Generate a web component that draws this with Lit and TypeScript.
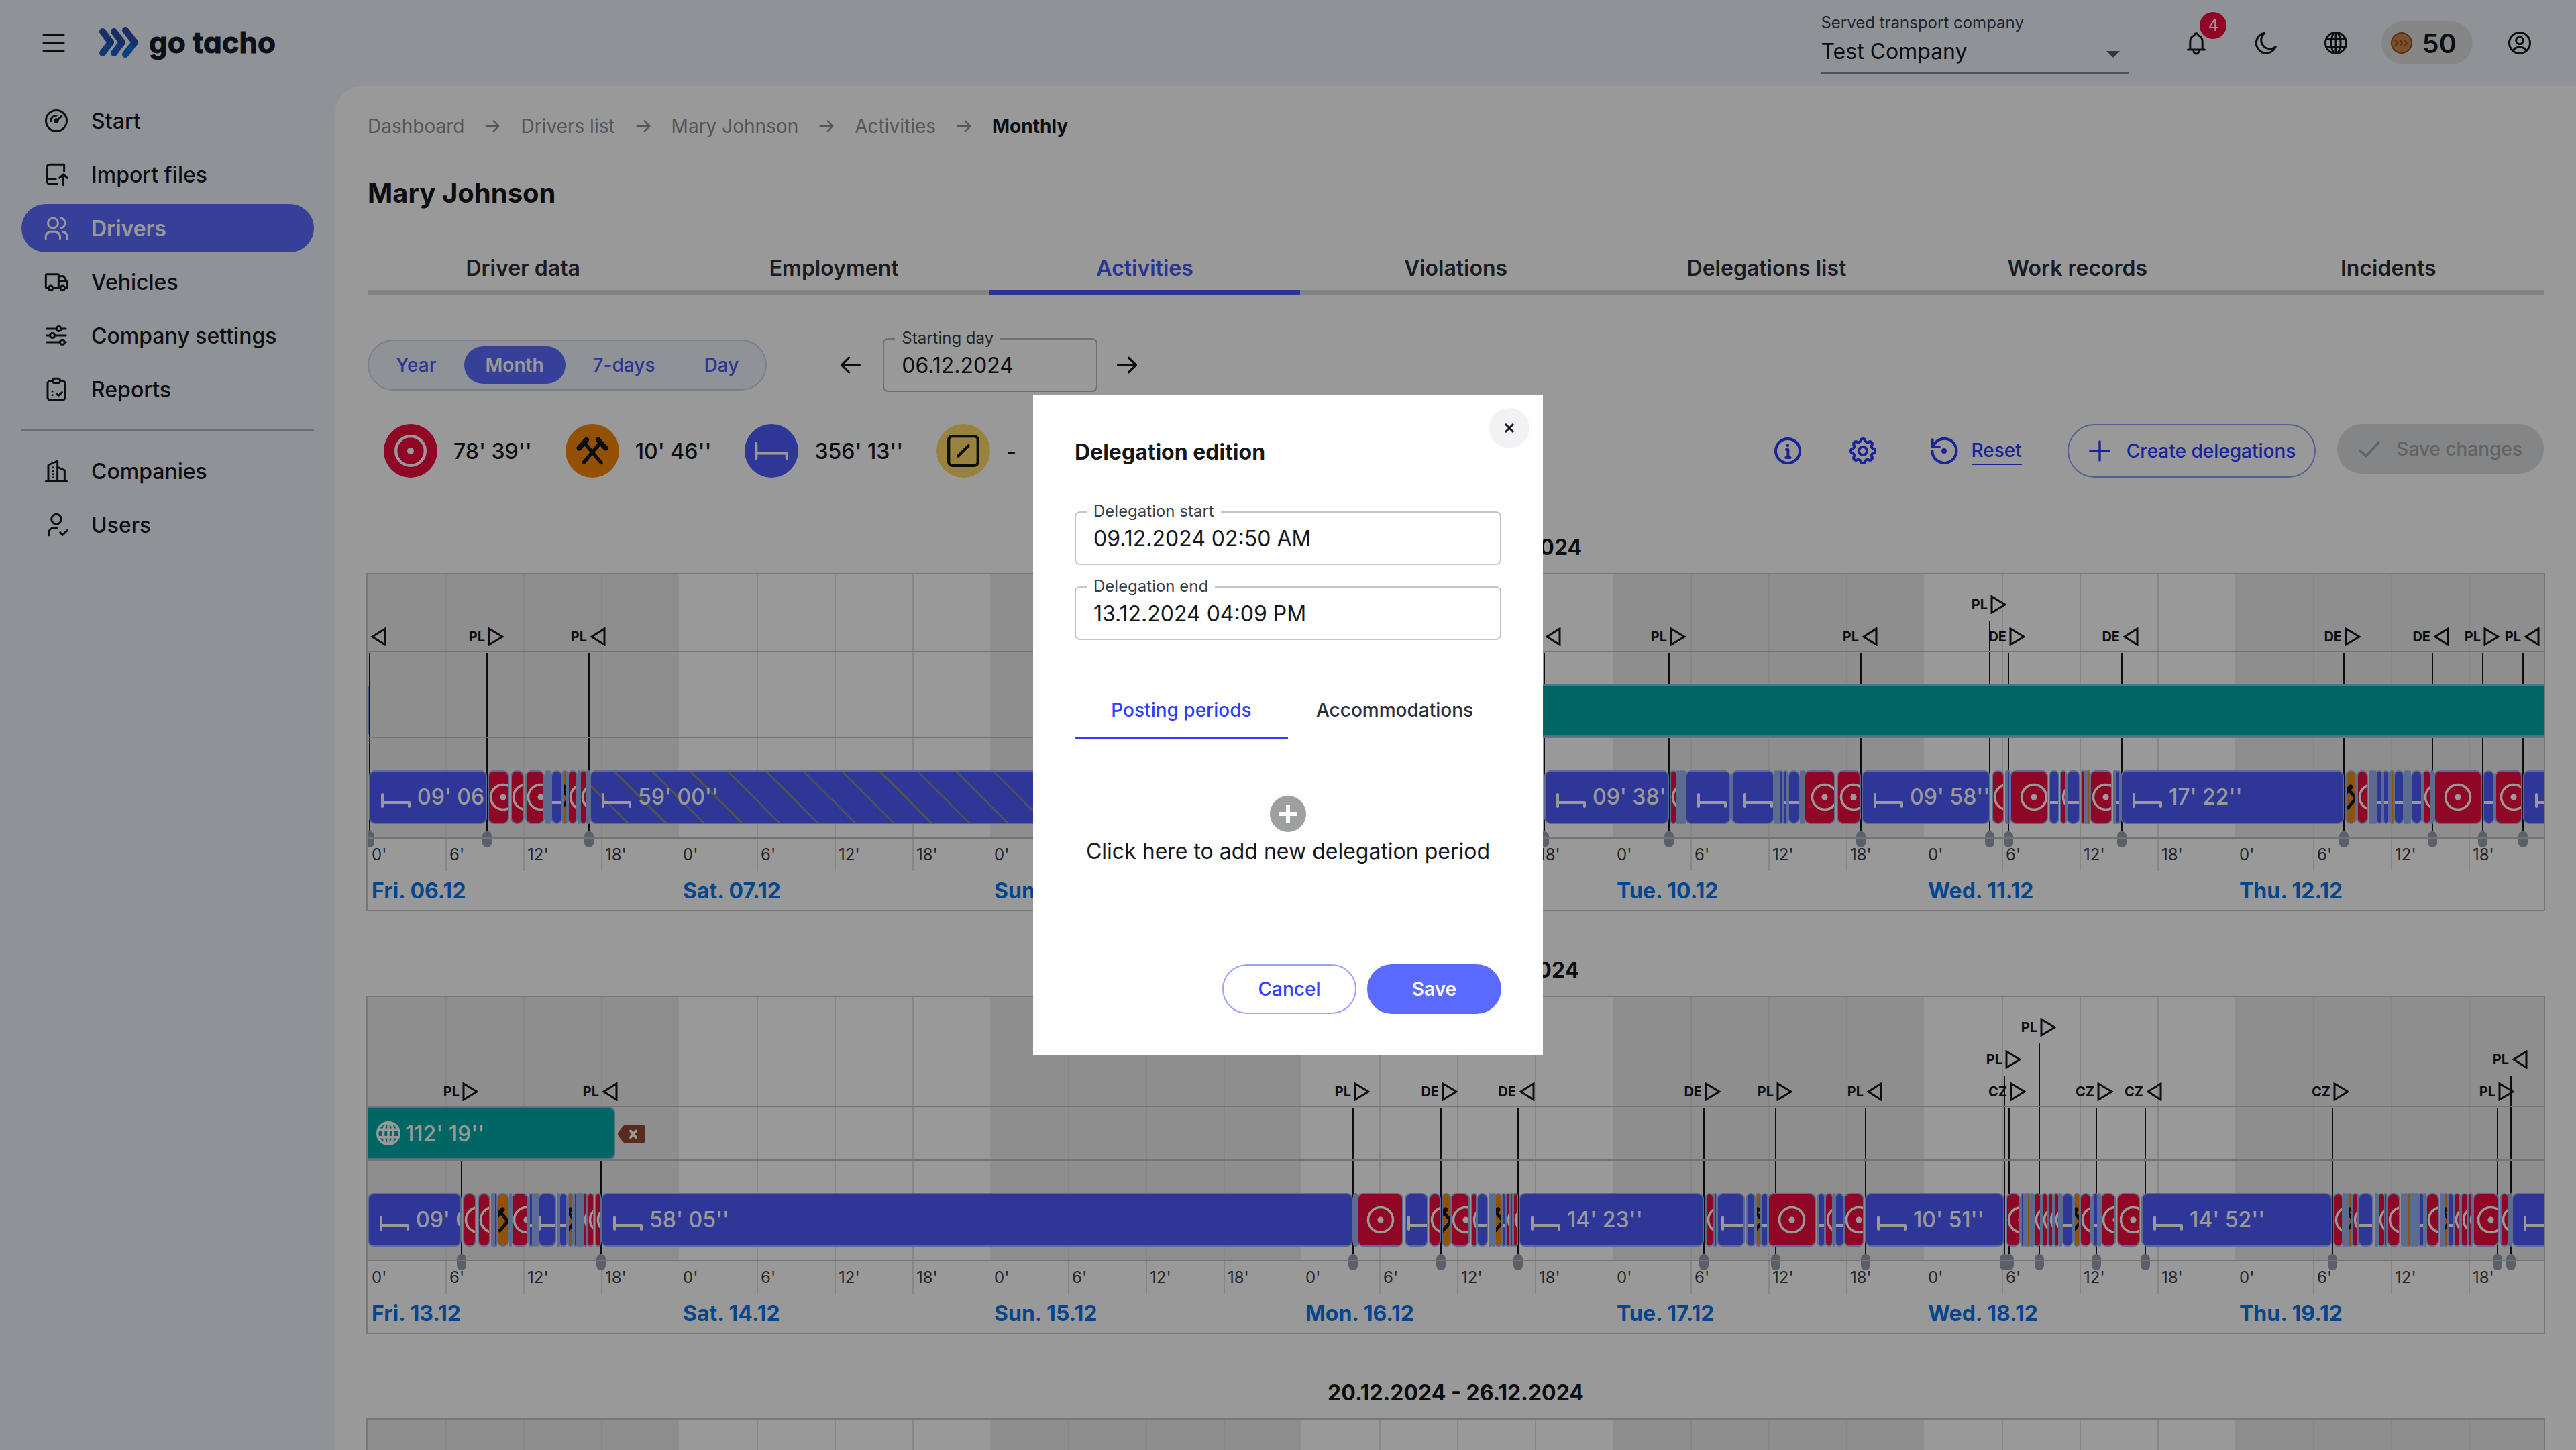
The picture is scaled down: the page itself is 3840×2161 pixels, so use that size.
import { LitElement, html, svg, css, nothing, TemplateResult } from "lit";
import { customElement, property } from "lit/decorators.js";
import { classMap } from "lit/directives/class-map.js";
import { styleMap } from "lit/directives/style-map.js";

/* ---------- icons (24 x 24 grid, stroked) ---------- */

const ICONS: Record<string, TemplateResult> = {
  menu: svg`<path d="M3 5h18M3 12h18M3 19h18"/>`,
  gauge: svg`<circle cx="12" cy="12" r="9.3"/><path d="M7 12.5a5 5 0 0 1 5-5.2M13 11.4l3.8-3.6"/><circle cx="12" cy="12" r="1.3"/>`,
  import: svg`<path d="M12.5 20.5H6a2.5 2.5 0 0 1-2.500-2.500V5.500a2.300 2.300 0 0 1 2.300-2.300h13.200v6M3.800 16.400h7.700M18.300 21.500v-9M14.800 15.200l3.500-3.300 3.500 3.300"/>`,
  users: svg`<circle cx="9" cy="7.5" r="4.5"/><path d="M2.5 21.5v-1.800a4.600 4.600 0 0 1 4.600-4.600h3.600a4.600 4.600 0 0 1 4.600 4.600v1.800M16.400 3.200a4.400 4.400 0 0 1 0 8.600M21.600 21.500v-1.800a4.600 4.600 0 0 0-3.400-4.400"/>`,
  truck: svg`<path d="M5 17.5H3.6a1 1 0 0 1-1-1V6.2a1 1 0 0 1 1-1H14V17.5M9 17.5h6.5M14 7h4.4l3 4.6v5.9H20M14 11.6h7.4"/><circle cx="7" cy="17.6" r="2"/><circle cx="17.6" cy="17.6" r="2"/>`,
  sliders: svg`<path d="M3.5 6h8.6M16.4 6h4.1M3.5 12h2.8M10.6 12h9.9M3.5 18h11.8M19.4 18h1.1"/><circle cx="14.2" cy="6" r="2.1"/><circle cx="8.4" cy="12" r="2.1"/><circle cx="17.3" cy="18" r="2.1"/>`,
  clipboard: svg`<rect x="4.2" y="4.8" width="15.6" height="16.7" rx="2"/><rect x="8.7" y="2.6" width="6.6" height="3.8" rx="1.6" class="hole"/><path d="M8.4 13.8h.1M8.4 17.2h.1M12.3 16.2l1.6 1.5 3.2-3"/>`,
  companies: svg`<path d="M2.6 21.3h18.8M4.8 21.3V6.6L13 3v18.3M13 8.4l6.4 2.9v10M9 8.8v.1M9 11.8v.1M9 14.8v.1M9 17.8v.1"/>`,
  usercheck: svg`<circle cx="12" cy="7" r="4.4"/><path d="M5.2 21.5v-2.2a4.4 4.4 0 0 1 4.4-4.4h3.2M15.4 19l2.1 2.2 4.3-4"/>`,
  bell: svg`<path d="M4.5 18h15M6.5 18v-7.5a5.5 5.5 0 0 1 3.7-5.2a1.8 1.8 0 0 1 3.6 0a5.5 5.5 0 0 1 3.7 5.2V18M9.6 18.4v.8a2.4 2.4 0 0 0 4.8 0v-.8"/>`,
  moon: svg`<path d="M10.6 3.2a9 9 0 1 0 9.9 12.4a6.6 6.6 0 0 1-9.9-12.4z"/>`,
  globe: svg`<circle cx="12" cy="12" r="9.3"/><ellipse cx="12" cy="12" rx="4.3" ry="9.3"/><path d="M3.3 8.7h17.4M3.3 15.3h17.4M12 2.7v18.6"/>`,
  account: svg`<circle cx="12" cy="12" r="9.3"/><circle cx="12" cy="9.8" r="3.2"/><path d="M6.2 19.2c.8-2.7 3-3.4 5.8-3.4s5 .7 5.8 3.4"/>`,
  right: svg`<path d="M4 12h16M13.5 5.5L20 12l-6.500 6.500"/>`,
  left: svg`<path d="M20 12H4M10.5 5.5L4 12l6.500 6.500"/>`,
  info: svg`<circle cx="12" cy="12" r="9"/><path d="M11 11h1.2v6M10.6 17h3.2M12 7.8v.3"/>`,
  gear: svg`<path d="M10.3 4.3c.4-1.8 3-1.8 3.4 0a1.7 1.7 0 0 0 2.6 1.1c1.5-1 3.3.8 2.4 2.3a1.7 1.7 0 0 0 1 2.6c1.8.4 1.8 3 0 3.4a1.7 1.7 0 0 0-1 2.6c.9 1.5-.9 3.3-2.4 2.4a1.7 1.7 0 0 0-2.6 1c-.4 1.8-3 1.8-3.4 0a1.7 1.7 0 0 0-2.6-1c-1.5.9-3.3-.9-2.4-2.4a1.7 1.7 0 0 0-1-2.6c-1.8-.4-1.8-3 0-3.4a1.7 1.7 0 0 0 1-2.6c-.9-1.5.9-3.3 2.4-2.3a1.7 1.7 0 0 0 2.6-1.1z"/><circle cx="12" cy="12" r="3"/>`,
  reset: svg`<path d="M3.2 12a9 9 0 1 0 1.9-5.6L3.5 9M3.3 3.6V9H8.4"/><circle cx="12" cy="12" r="1"/>`,
  plus: svg`<path d="M12 3.500v17M3.500 12h17"/>`,
  check: svg`<path d="M3.5 13.5l5.5 5L20.5 6"/>`,
};

const icon = (name: string, cls = "") =>
  html`<svg class="icon ${cls}" viewBox="0 0 24 24" aria-hidden="true">${ICONS[name]}</svg>`;

/* tachograph mode pictograms, 44 x 44 grid */
const driveGlyph = svg`<circle cx="22" cy="22" r="18.5" fill="none" stroke="#fff" stroke-width="3.5"/><circle cx="22" cy="22" r="4.6" fill="#fff"/>`;
const driveDisc = svg`<circle cx="22" cy="22" r="20" fill="none" stroke="#fff" stroke-width="4"/><circle cx="22" cy="22" r="4.6" fill="#fff"/>`;
const restGlyph = svg`<path d="M2 18v18M2 30h40M42 30v6" fill="none" stroke="#fff" stroke-width="4" stroke-linecap="round"/>`;
const restDisc = svg`<path d="M1 12v20M1 25h42M43 25v7" fill="none" stroke="#fff" stroke-width="4" stroke-linecap="round"/>`;
const workGlyph = svg`<g fill="none" stroke="#15171c" stroke-linecap="round"><path d="M12 12l22 26M32 12L10 38" stroke-width="5"/><path d="M4 18l10-11M40 18L30 7" stroke-width="7"/></g>`;
const availGlyph = svg`<g fill="none" stroke="#15171c" stroke-linecap="round"><rect x="2" y="2" width="40" height="40" rx="5" stroke-width="4"/><path d="M15 29l14-14" stroke-width="4"/></g>`;

const DISC_GLYPHS: Record<string, TemplateResult> = { drive: driveDisc, work: workGlyph, rest: restDisc, avail: availGlyph };

/* ---------- data ---------- */

/* A week is 3248 units wide: 464 for each day. */
const WEEK = 3248;
const pct = (v: number) => `${(v / WEEK) * 100}%`;

type Seg = [from: number, to: number, mode: "R" | "B" | "O" | "H" | "p", label?: string];
type Mark = [at: number, dir: ">" | "<", country: string, level?: number];

interface Week {
  title: string;
  tall?: boolean;
  days: string[];
  marks: Mark[];
  segs: Seg[];
  delegation?: [from: number, to: number, label: string];
  closes?: boolean;
  sliver?: boolean;
}

const WEEKS: Week[] = [
  {
    title: "06.12.2024 - 12.12.2024",
    days: ["Fri. 06.12", "Sat. 07.12", "Sun. 08.12", "Mon. 09.12", "Tue. 10.12", "Wed. 11.12", "Thu. 12.12"],
    sliver: true,
    delegation: [1447, 3260, "112' 19''"],
    marks: [
      [3, "<", ""], [178, ">", "PL"], [330, "<", "PL"], [1754, "<", "PL"], [1940, ">", "PL"], [2226, "<", "PL"],
      [2418, ">", "PL", 1], [2446, ">", "DE"], [2615, "<", "DE"], [2946, ">", "DE"], [3078, "<", "DE"],
      [3153, ">", "PL"], [3213, "<", "PL"],
    ],
    segs: [
      [2, 178, "B", "09' 06''"], [179, 211, "R"], [213, 233, "R"], [235, 264, "R"], [265, 270, "p"], [269, 273, "R"],
      [273, 291, "B"], [290, 298, "O"], [298, 313, "R"], [313, 317, "p"], [316, 327, "R"], [326, 332, "p"],
      [331, 1472, "H", "59' 00''"], [1474, 1560, "R"], [1562, 1750, "B"],
      [1754, 1940, "B", "09' 38''"], [1941, 1952, "R"], [1951, 1956, "p"], [1956, 1961, "p"], [1960, 1965, "R"],
      [1964, 2032, "B"], [2033, 2097, "B"], [2097, 2101, "p"], [2100, 2105, "O"], [2104, 2110, "B"], [2110, 2117, "B"],
      [2117, 2135, "B"], [2135, 2139, "R"], [2138, 2142, "p"], [2141, 2188, "R"], [2190, 2226, "R"],
      [2227, 2419, "B", "09' 58''"], [2421, 2440, "R"], [2441, 2448, "p"], [2443, 2449, "B"], [2448, 2505, "R"],
      [2506, 2522, "B"], [2523, 2533, "R"], [2532, 2553, "B"], [2554, 2560, "R"], [2559, 2564, "p"], [2563, 2568, "O"],
      [2567, 2601, "R"], [2602, 2607, "p"], [2605, 2613, "B"], [2613, 2946, "B", "17' 22''"], [2948, 2965, "O"],
      [2965, 2982, "R"], [2983, 2990, "p"], [2988, 2995, "p"], [2994, 3004, "B"], [3004, 3014, "B"], [3015, 3021, "O"],
      [3020, 3036, "B"], [3035, 3043, "p"], [3042, 3046, "R"], [3046, 3063, "B"], [3063, 3076, "R"], [3075, 3080, "O"],
      [3080, 3152, "R"], [3153, 3171, "B"], [3171, 3212, "R"], [3213, 3290, "B"],
    ],
  },
  {
    title: "13.12.2024 - 19.12.2024",
    tall: true,
    closes: true,
    delegation: [-12, 369, "112' 19''"],
    days: ["Fri. 13.12", "Sat. 14.12", "Sun. 15.12", "Mon. 16.12", "Tue. 17.12", "Wed. 18.12", "Thu. 19.12"],
    marks: [
      [140, ">", "PL"], [348, "<", "PL"], [1469, ">", "PL"], [1600, ">", "DE"], [1715, "<", "DE"], [1992, ">", "DE"],
      [2099, ">", "PL"], [2233, "<", "PL"], [2440, ">", "PL", 1], [2447, ">", "CZ"], [2492, ">", "PL", 2],
      [2577, ">", "CZ"], [2650, "<", "CZ"], [2929, ">", "CZ"], [3175, ">", "PL"], [3195, "<", "PL", 1],
    ],
    segs: [
      [0, 140, "B", "09' 06''"], [142, 162, "R"], [164, 183, "R"], [184, 189, "p"], [188, 193, "B"], [192, 211, "O"],
      [211, 215, "p"], [214, 240, "R"], [240, 247, "B"], [247, 251, "p"], [250, 255, "p"], [254, 281, "B"],
      [282, 287, "p"], [285, 298, "B"], [298, 307, "O"], [307, 312, "B"], [311, 318, "p"], [316, 321, "p"],
      [320, 328, "R"], [327, 338, "R"], [339, 348, "R"], [348, 1469, "B", "58' 05''"], [1469, 1476, "p"],
      [1475, 1544, "R"], [1546, 1581, "B"], [1582, 1600, "R"], [1601, 1615, "O"], [1614, 1643, "R"], [1645, 1654, "R"],
      [1653, 1670, "B"], [1671, 1676, "p"], [1676, 1681, "p"], [1680, 1691, "O"], [1690, 1697, "B"], [1696, 1704, "R"],
      [1703, 1708, "B"], [1707, 1715, "R"], [1716, 1992, "B", "14' 23''"], [1994, 2007, "R"], [2006, 2012, "B"],
      [2011, 2053, "B"], [2055, 2069, "B"], [2069, 2077, "O"], [2077, 2088, "B"], [2087, 2159, "R"], [2161, 2173, "B"],
      [2172, 2185, "R"], [2184, 2188, "R"], [2187, 2201, "B"], [2200, 2231, "R"], [2232, 2440, "B", "10' 51''"],
      [2442, 2464, "R"], [2464, 2470, "B"], [2469, 2474, "p"], [2473, 2479, "O"], [2478, 2484, "p"], [2483, 2495, "R"],
      [2495, 2505, "R"], [2505, 2513, "R"], [2513, 2522, "R"], [2521, 2526, "p"], [2525, 2543, "B"], [2543, 2553, "O"],
      [2552, 2570, "R"], [2571, 2580, "B"], [2580, 2584, "R"], [2583, 2606, "R"], [2608, 2642, "R"],
      [2644, 2929, "B", "14' 52''"], [2930, 2945, "R"], [2944, 2948, "p"], [2948, 2952, "p"], [2951, 2959, "O"],
      [2958, 2968, "R"], [2967, 2990, "B"], [2992, 2997, "p"], [2996, 3008, "R"], [3006, 3011, "B"], [3010, 3030, "R"],
      [3031, 3037, "p"], [3036, 3041, "p"], [3040, 3046, "O"], [3045, 3051, "p"], [3050, 3058, "p"], [3057, 3066, "B"],
      [3065, 3069, "O"], [3068, 3088, "R"], [3089, 3095, "p"], [3094, 3101, "O"], [3100, 3110, "B"], [3109, 3120, "R"],
      [3120, 3132, "R"], [3131, 3138, "R"], [3138, 3177, "R"], [3179, 3192, "R"], [3191, 3197, "p"], [3196, 3290, "B"],
    ],
  },
  {
    title: "20.12.2024 - 26.12.2024",
    days: ["Fri. 20.12", "Sat. 21.12", "Sun. 22.12", "Mon. 23.12", "Tue. 24.12", "Wed. 25.12", "Thu. 26.12"],
    marks: [],
    segs: [],
  },
];

const MODE_CLASS = { R: "drive", B: "rest", O: "work", H: "rest", p: "pale" } as const;

/* Offset of the pictogram inside a segment: centred when wide, pushed right when narrow. */
const glyphLeft = (mode: string, w: number, label?: string) => {
  if (label) return 18;
  if (mode === "R") return w > 60 ? w / 2 - 22 : Math.max(1, w / 2 - 15);
  if (mode === "B") return w > 60 ? 18 : w / 2 - 14;
  return w / 2 - 15;
};

/* ---------- one week of the timeline ---------- */

@customElement("week-chart")
export class WeekChart extends LitElement {
  @property({ attribute: false }) week!: Week;

  static styles = css`
    :host { display: block; }
    h2 { margin: 0; padding-bottom: 18px; font-size: 32px; line-height: 40px; font-weight: 700; text-align: center; color: #15171c; }
    .chart { position: relative; overflow: hidden; margin: 0 -2px; border: 2px solid #c6c6c6; }
    .canvas { position: relative; width: calc(100% + 4px); }
    .backdrop { position: absolute; inset: 0; display: grid; grid-template-columns: repeat(7, 1fr); }
    .day { display: grid; grid-template-columns: repeat(4, 1fr); background: linear-gradient(#ededed, #ededed) no-repeat 0 0 / 100% calc(100% - 108px); }
    .day:nth-child(even) { background: none; }
    .quarter { margin-bottom: 58px; border-left: 2px solid #e1e1e1; }
    .quarter:first-child { border-color: transparent; }
    .rows { position: relative; }
    .row { position: relative; box-sizing: border-box; border-bottom: 2px solid #c0c0c0; }
    .flags { height: 116px; }
    .delegations { height: 128px; }
    .tall .flags { height: 164px; }
    .tall .delegations { height: 80px; }
    .activities { height: 150px; }
    .marks { position: absolute; inset: 0; }
    .mark { position: absolute; top: var(--top); bottom: -13px; width: 0; font-size: 20px; line-height: 28px; font-weight: 700; color: #15171c; }
    .mark .country { position: absolute; right: 3px; top: 0; }
    .mark svg { position: absolute; left: 1px; top: 0; width: 24px; height: 28px; fill: none; stroke: #15171c; stroke-width: 3; }
    .mark .line { position: absolute; left: -1px; top: 38px; bottom: 12px; width: 2px; background: #15171c; }
    .mark .knob { position: absolute; left: -7px; bottom: 0; width: 14px; height: 24px; border-radius: 7px; background: #969fb0; }
    .bar { position: absolute; bottom: 0; height: 78px; box-sizing: border-box; display: flex; align-items: center; gap: 4px; padding-left: 20px; border: 2px solid #98b4f5; border-radius: 8px; background: #00aaa5; color: #fff; font-size: 32px; font-weight: 500; }
    .bar svg { width: 42px; height: 42px; fill: none; stroke: #fff; stroke-width: 2; }
    .del { position: absolute; bottom: 24px; width: 40px; height: 28px; margin-left: 4px; padding: 0; border: 0; background: none; }
    .del svg { display: block; width: 40px; height: 28px; }
    .sliver { position: absolute; left: 0; bottom: 4px; width: 2px; height: 72px; background: #78a0ee; }
    .seg { position: absolute; top: 48px; height: 80px; box-sizing: border-box; overflow: hidden; border: 2px solid #98b4f0; border-radius: 9px; }
    .drive { background: #ee0d3f; }
    .rest { background: #4e5cfc; }
    .work { background: #f38708; }
    .pale { background: #98b4f0; }
    .hatched { background: repeating-linear-gradient(45deg, transparent 0 37px, #85858c 37px 40px), #4e5cfc; }
    .seg .glyph { position: absolute; top: 16px; width: 44px; height: 44px; }
    .seg .label { position: absolute; left: 70px; top: 18px; font-size: 32px; line-height: 40px; font-weight: 500; white-space: nowrap; color: #fff; }
    .axis { display: grid; grid-template-columns: repeat(7, 1fr); }
    .hours { display: grid; grid-template-columns: repeat(4, 1fr); font-size: 24px; line-height: 48px; color: #3c3f48; }
    .hours span, .date { padding-left: 6px; }
    .date { padding-top: 2px; font-size: 32px; line-height: 56px; font-weight: 700; color: #0776ed; }
  `;

  private mark([at, dir, country, level = 0]: Mark, tall?: boolean) {
    const top = (tall ? 164 : 116) - 37 - 48 * level;
    return html`<div class="mark" style=${styleMap({ left: pct(at), "--top": `${top}px` })}>
      <span class="line"></span><span class="knob"></span>
      <span class="country">${country}</span>
      <svg viewBox="0 0 24 28" aria-hidden="true"><path d=${dir === ">" ? "M2 2v24L22 14z" : "M22 2v24L3 14z"} /></svg>
    </div>`;
  }

  private seg([from, to, mode, label]: Seg) {
    const w = to - from;
    const cls = MODE_CLASS[mode];
    return html`<div class=${classMap({ seg: true, [cls]: true, hatched: mode === "H" })}
      style=${styleMap({ left: pct(from), width: pct(w) })}>
      ${mode === "p" || w < 7 ? nothing : html`
        <svg class="glyph" viewBox="0 0 44 44" aria-hidden="true" style=${styleMap({ left: `${glyphLeft(mode, w, label) - 2}px` })}>
          ${mode === "R" ? driveGlyph : mode === "O" ? workGlyph : restGlyph}</svg>`}
      ${label ? html`<span class="label">${label}</span>` : nothing}
    </div>`;
  }

  render() {
    const w = this.week;
    return html`
      <h2>${w.title}</h2>
      <div class=${classMap({ chart: true, tall: !!w.tall })}>
        <div class="canvas">
          <div class="backdrop">
            ${w.days.map(() => html`<div class="day">${[0, 1, 2, 3].map(() => html`<div class="quarter"></div>`)}</div>`)}
          </div>
          <div class="rows">
            <div class="marks">${w.marks.map((m) => this.mark(m, w.tall))}</div>
            <div class="row flags"></div>
            <div class="row delegations">
              ${w.sliver ? html`<div class="sliver"></div>` : nothing}
              ${w.delegation
                ? html`<div class="bar" style=${styleMap({ left: pct(w.delegation[0]), width: pct(w.delegation[1] - w.delegation[0]) })}>
                    <svg viewBox="0 0 24 24" aria-hidden="true">${ICONS.globe}</svg>${w.delegation[2]}
                  </div>`
                : nothing}
              ${w.closes
                ? html`<button class="del" aria-label="Remove delegation" style=${styleMap({ left: pct(w.delegation![1]) })}>
                    <svg viewBox="0 0 40 28"><path d="M12 0h25a3 3 0 0 1 3 3v22a3 3 0 0 1-3 3H12Q9 28 7 25L1 17q-2-3 0-6L7 3q2-3 5-3z" fill="#944835"/><path d="M19 9.500l8 9.500M27 9.500l-8 9.500" stroke="#fff" stroke-width="4" stroke-linecap="round"/></svg>
                  </button>`
                : nothing}
            </div>
            <div class="row activities">${w.segs.map((s) => this.seg(s))}</div>
          </div>
          <div class="axis">
            ${w.days.map((d) => html`<div>
              <div class="hours"><span>0'</span><span>6'</span><span>12'</span><span>18'</span></div>
              <div class="date">${d}</div>
            </div>`)}
          </div>
        </div>
      </div>`;
  }
}

/* ---------- modal dialog ---------- */

@customElement("delegation-dialog")
export class DelegationDialog extends LitElement {
  static styles = css`
    :host { position: fixed; inset: 0; display: flex; align-items: center; justify-content: center; background: rgba(0, 0, 0, 0.4); }
    button, input { font: inherit; }
    .dialog { position: relative; box-sizing: border-box; width: 760px; padding: 66px 62px 62px; background: #fff; color: #15171c; font-size: 32px; }
    .close { position: absolute; right: 20px; top: 20px; width: 60px; height: 60px; border: 0; border-radius: 50%; padding: 0; background: #f2f2f5; display: flex; align-items: center; justify-content: center; }
    .close svg { width: 16px; height: 16px; stroke: #15171c; stroke-width: 3; }
    h1 { margin: 0 0 68px; font-size: 32px; line-height: 40px; font-weight: 700; }
    .field { position: relative; margin-bottom: 32px; }
    .field label { position: absolute; left: 18px; top: -16px; padding: 0 10px; background: #fff; font-size: 24px; line-height: 32px; color: #3a3f4b; }
    .field input { display: block; box-sizing: border-box; width: 100%; height: 80px; padding: 0 26px; border: 2px solid #c6c6c6; border-radius: 8px; background: none; color: #15171c; }
    .tabs { display: grid; grid-template-columns: 1fr 1fr; margin-top: 64px; }
    .tabs button { height: 84px; border: 0; border-bottom: 4px solid transparent; background: none; padding: 0; font-size: 28px; font-weight: 500; color: #2b303b; }
    .tabs .on { border-color: #2f3fff; color: #2f3fff; }
    .add { display: flex; flex-direction: column; align-items: center; width: 100%; margin-top: 84px; padding: 0; border: 0; background: none; color: #15171c; line-height: 40px; gap: 9px; white-space: nowrap; }
    .add svg { width: 54px; height: 54px; }
    .actions { display: flex; justify-content: flex-end; gap: 16px; margin-top: 148px; }
    .actions button { width: 200px; height: 74px; border-radius: 37px; border: 2px solid #9aa3ff; background: #fff; color: #2f3fff; font-size: 28px; font-weight: 500; padding: 0; }
    .actions .save { border-color: #5c6bff; background: #5c6bff; color: #fff; font-weight: 600; }
  `;

  render() {
    return html`<div class="dialog" role="dialog" aria-labelledby="title">
      <button class="close" aria-label="Close"><svg viewBox="0 0 16 16"><path d="M2 2l12 12M14 2L2 14" /></svg></button>
      <h1 id="title">Delegation edition</h1>
      <div class="field"><label for="start">Delegation start</label><input id="start" value="09.12.2024 02:50 AM" /></div>
      <div class="field"><label for="end">Delegation end</label><input id="end" value="13.12.2024 04:09 PM" /></div>
      <div class="tabs" role="tablist">
        <button class="on" role="tab" aria-selected="true">Posting periods</button>
        <button role="tab" aria-selected="false">Accommodations</button>
      </div>
      <button class="add">
        <svg viewBox="0 0 54 54" aria-hidden="true"><circle cx="27" cy="27" r="27" fill="#9da09f" /><path d="M27 14v26M14 27h26" stroke="#fff" stroke-width="6" /></svg>
        Click here to add new delegation period
      </button>
      <div class="actions"><button>Cancel</button><button class="save">Save</button></div>
    </div>`;
  }
}

/* ---------- application shell ---------- */

@customElement("app-root")
export class AppRoot extends LitElement {
  static styles = css`
    :host { display: block; font-family: Inter, "Liberation Sans", sans-serif; font-size: 32px; color: #15171c; }
    button, input, select { font: inherit; color: inherit; }
    button { padding: 0; border: 0; background: none; }
    a { color: inherit; text-decoration: none; }
    .icon { display: block; flex: none; width: 40px; height: 40px; fill: none; stroke: currentColor; stroke-width: 1.800; stroke-linecap: round; stroke-linejoin: round; }
    .icon .hole { fill: #eff5fd; }
    .shell { display: grid; grid-template: 128px 1fr / 500px 1fr; height: 100vh; overflow: hidden; background: #eff5fd; }

    .top { grid-column: 1 / -1; display: flex; align-items: center; padding: 0 64px 0 60px; }
    .logo { display: flex; align-items: center; gap: 12px; margin-left: 46px; padding-bottom: 2px; font-size: 44px; line-height: 56px; font-weight: 700; font-feature-settings: "cv11"; color: #161b2c; -webkit-text-stroke: 1px #161b2c; paint-order: stroke; }
    .logo svg { width: 64px; height: 48px; }
    .company { display: flex; flex-direction: column; position: relative; width: 460px; margin-left: auto; border-bottom: 2px solid #83868f; }
    .company label { font-size: 24px; line-height: 32px; color: #3a3f4b; }
    .company select { appearance: none; border: 0; background: none; height: 58px; padding: 0 0 6px; }
    .company .caret { position: absolute; right: 14px; bottom: 22px; border: 10px solid transparent; border-top-color: #5a5d64; border-bottom: 0; }
    .tools { display: flex; align-items: center; margin-left: 80px; gap: 64px; }
    .bell { position: relative; }
    .badge { position: absolute; left: 25px; top: -26px; width: 40px; height: 40px; border-radius: 50%; background: #ee0d3f; color: #fff; font-size: 24px; line-height: 40px; text-align: center; }
    .coins { display: flex; align-items: center; gap: 14px; height: 64px; margin: 0 -14px 0 -16px; padding: 0 24px 0 14px; border-radius: 32px; background: #dfe0e2; font-size: 40px; font-weight: 600; }
    .coins svg { width: 32px; height: 32px; }

    .side { padding: 16px 32px; display: flex; flex-direction: column; gap: 8px; }
    .side a { display: flex; align-items: center; gap: 32px; height: 72px; padding: 0 32px; border-radius: 36px; font-weight: 500; }
    .side .on { background: #5c6bff; color: #fff; font-weight: 600; }
    .side hr { width: 100%; margin: 16px 0; border: 0; border-top: 2px solid #b4b9c2; }

    main { display: flex; flex-direction: column; overflow: hidden; padding: 40px 48px 0; border-radius: 40px 0 0 0; background: #fff; }
    main > * { flex: none; }
    .crumbs { display: flex; align-items: center; gap: 28px; font-size: 28px; line-height: 40px; color: #8b8e97; }
    .crumbs .icon { width: 28px; height: 28px; stroke-width: 2; }
    .crumbs .here { font-weight: 700; color: #15171c; }
    h1 { margin: 56px 0 48px; font-size: 40px; line-height: 48px; font-weight: 700; }
    .tabs { display: grid; grid-template-columns: repeat(7, 1fr); }
    .tabs button { height: 80px; padding-top: 6px; border-bottom: 8px solid #d9dcdb; font-weight: 600; color: #2b303b; }
    .tabs .on { border-color: #4757f5; color: #4757f5; }

    .filters { display: flex; align-items: center; height: 76px; margin-top: 66px; }
    .range { display: flex; gap: 9px; padding: 8px; border: 2px solid #c5d6ee; border-radius: 38px; background: #eff5fd; font-size: 28px; font-weight: 500; color: #4a59f5; }
    .range button { height: 56px; padding: 0 32px; border-radius: 28px; }
    .range .on { background: #5c6bff; color: #fff; font-weight: 600; }
    .arrow .icon { stroke-width: 2; }
    .back { margin-left: 105px; }
    .date { position: relative; width: 320px; margin: 0 24px 0 28px; }
    .date label { position: absolute; left: 18px; top: -16px; padding: 0 10px; background: #fff; font-size: 24px; line-height: 32px; color: #3a3f4b; }
    .date input { display: block; box-sizing: border-box; width: 100%; height: 80px; padding: 0 26px; border: 2px solid #b9b9b9; border-radius: 8px; background: none; }

    .stats { display: flex; align-items: center; margin: 50px 0 16px; padding-left: 24px; font-weight: 500; }
    .stat { display: flex; align-items: center; gap: 24px; margin-right: 50px; }
    .disc { display: flex; align-items: center; justify-content: center; width: 80px; height: 80px; border-radius: 50%; }
    .disc .glyph { width: 48px; height: 48px; }
    .drive { background: #ee0d3f; }
    .rest { background: #4e5cfc; }
    .work { background: #f38708; }
    .avail { background: #ffd966; }
    .tooling { display: flex; align-items: center; gap: 64px; margin-left: auto; font-size: 28px; color: #2b3bff; }
    .tooling .icon { width: 48px; height: 48px; stroke-width: 2; }
    .reset { display: flex; align-items: center; gap: 17px; margin: 0 4px 0 9px; }
    .reset span { border-bottom: 2px solid; line-height: 40px; }
    .create, .commit { display: flex; align-items: center; }
    .create { gap: 20px; height: 80px; padding: 0 28px 0 26px; border: 2px solid #8e9ffb; border-radius: 40px; font-weight: 500; }
    .create .icon, .commit .icon { width: 40px; height: 40px; }
    .commit { align-self: flex-start; gap: 20px; height: 74px; margin-left: -32px; padding: 0 32px 0 28px; border-radius: 37px; background: #dcdee0; color: #a5a3a3; }
    week-chart { margin-top: 68px; }
  `;

  private nav(name: string, label: string, on = false) {
    return html`<a href="#" class=${classMap({ on })}>${icon(name)}<span>${label}</span></a>`;
  }

  private stat(mode: string, value: string) {
    return html`<div class="stat">
      <span class="disc ${mode}"><svg class="glyph" viewBox="0 0 44 44" aria-hidden="true">${DISC_GLYPHS[mode]}</svg></span>
      <span>${value}</span>
    </div>`;
  }

  render() {
    const crumbs = ["Dashboard", "Drivers list", "Mary Johnson", "Activities"];
    const tabs = ["Driver data", "Employment", "Activities", "Violations", "Delegations list", "Work records", "Incidents"];
    const ranges = ["Year", "Month", "7-days", "Day"];
    const chevron = (x: number) => svg`<path d="M${x + 12} 24L${x} 40" stroke="#1e5cc0"/><path d="M${x} 8l12 16" stroke="#2a4ea3"/>`;
    return html`
      <div class="shell">
        <header class="top">
          <button aria-label="Menu">${icon("menu")}</button>
          <a class="logo" href="#">
            <svg viewBox="0 0 64 48" fill="none" stroke-width="10" stroke-linecap="round" aria-hidden="true">
              ${chevron(7)}${chevron(24)}<path d="M55 24L41 42" stroke="#0d6bd2" /><path d="M41 6l14 18" stroke="#2a4ea3" />
            </svg>
            <span>go tacho</span>
          </a>
          <div class="company">
            <label for="company">Served transport company</label>
            <select id="company"><option>Test Company</option></select>
            <span class="caret"></span>
          </div>
          <div class="tools">
            <button class="bell" aria-label="Notifications">${icon("bell")}<span class="badge">4</span></button>
            <button aria-label="Dark mode">${icon("moon")}</button>
            <button aria-label="Language">${icon("globe")}</button>
            <div class="coins">
              <svg viewBox="0 0 32 32" aria-hidden="true"><circle cx="16" cy="16" r="15" fill="#c98548" stroke="#8f4f26" stroke-width="2" /><path d="M6 11l4 5-4 5M13 11l4 5-4 5M20 11l4 5-4 5" fill="none" stroke="#8a4a1e" stroke-width="2" /></svg>
              <span>50</span>
            </div>
            <button aria-label="Account">${icon("account")}</button>
          </div>
        </header>

        <nav class="side">
          ${this.nav("gauge", "Start")} ${this.nav("import", "Import files")} ${this.nav("users", "Drivers", true)}
          ${this.nav("truck", "Vehicles")} ${this.nav("sliders", "Company settings")} ${this.nav("clipboard", "Reports")}
          <hr />
          ${this.nav("companies", "Companies")} ${this.nav("usercheck", "Users")}
        </nav>

        <main>
          <nav class="crumbs">
            ${crumbs.map((c) => html`<a href="#">${c}</a>${icon("right")}`)}<span class="here">Monthly</span>
          </nav>
          <h1>Mary Johnson</h1>
          <div class="tabs" role="tablist">
            ${tabs.map((t) => html`<button role="tab" class=${classMap({ on: t === "Activities" })}>${t}</button>`)}
          </div>
          <div class="filters">
            <div class="range">
              ${ranges.map((r) => html`<button class=${classMap({ on: r === "Month" })}>${r}</button>`)}
            </div>
            <button class="arrow back" aria-label="Previous">${icon("left")}</button>
            <div class="date"><label for="day">Starting day</label><input id="day" value="06.12.2024" /></div>
            <button class="arrow" aria-label="Next">${icon("right")}</button>
          </div>
          <div class="stats">
            ${this.stat("drive", "78' 39''")} ${this.stat("work", "10' 46''")} ${this.stat("rest", "356' 13''")} ${this.stat("avail", "-")}
            <div class="tooling">
              <button aria-label="Information">${icon("info")}</button>
              <button aria-label="Settings">${icon("gear")}</button>
              <button class="reset">${icon("reset")}<span>Reset</span></button>
              <button class="create">${icon("plus")}Create delegations</button>
              <button class="commit" disabled>${icon("check")}Save changes</button>
            </div>
          </div>
          ${WEEKS.map((w) => html`<week-chart .week=${w}></week-chart>`)}
        </main>
      </div>
      <delegation-dialog></delegation-dialog>`;
  }
}
